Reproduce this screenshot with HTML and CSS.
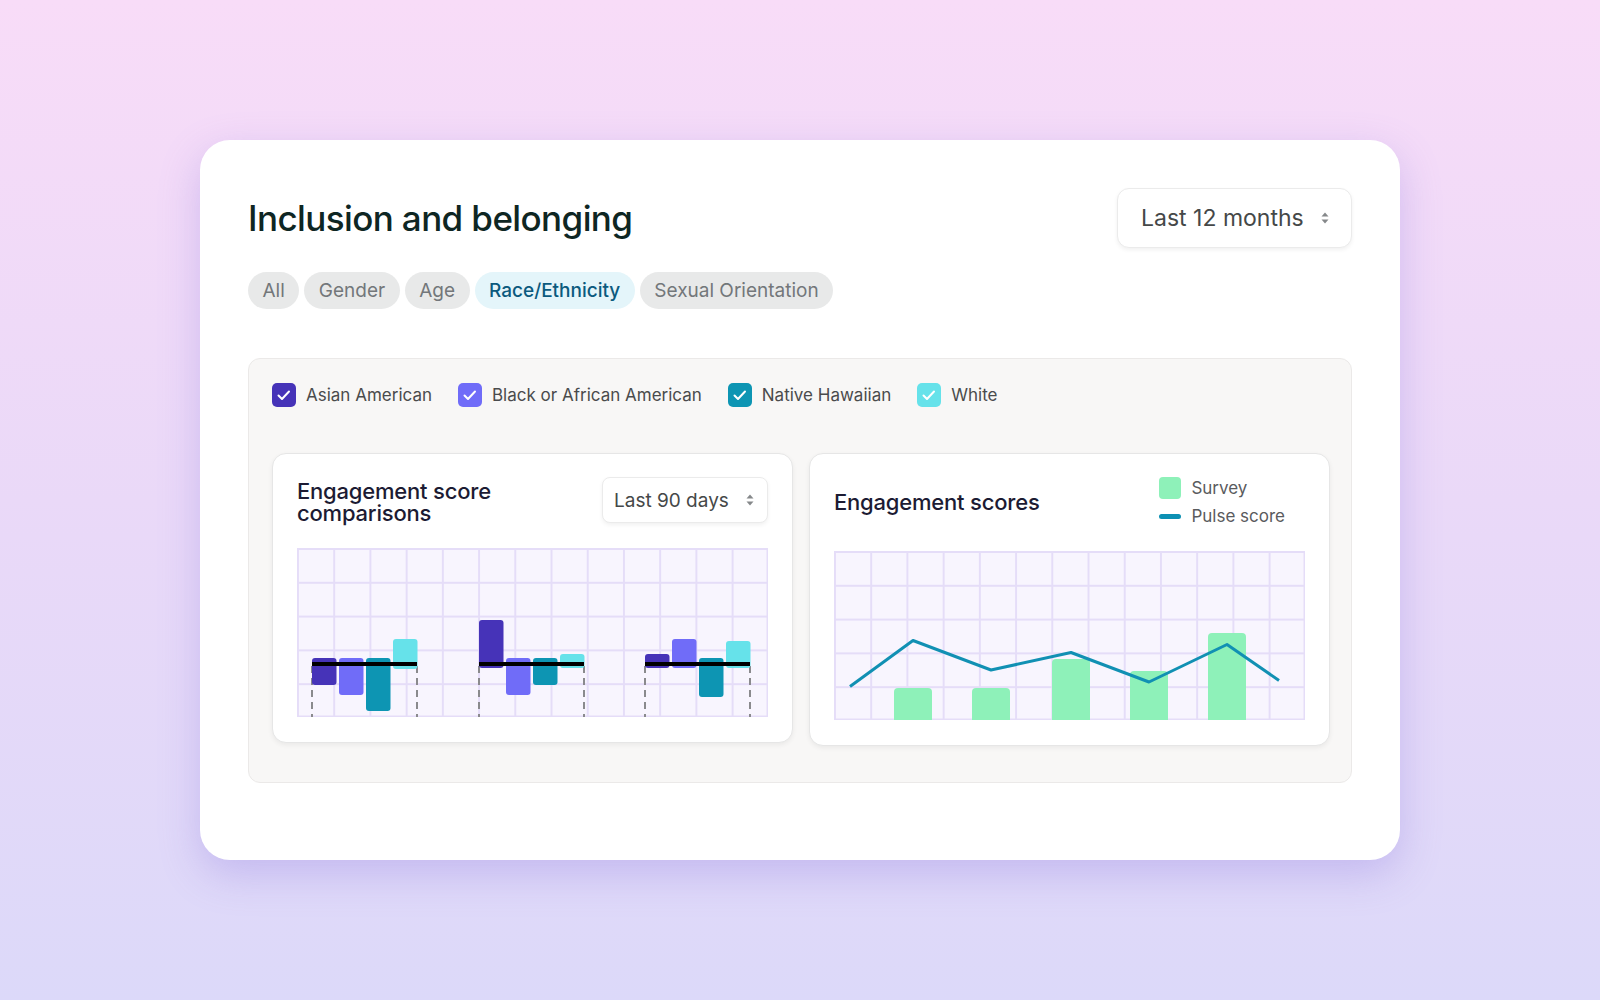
FILE: index.html
```html
<!DOCTYPE html>
<html lang="en">
  <head>
    <meta charset="UTF-8" />
    <meta name="viewport" content="width=device-width, initial-scale=1.0" />
    <title>Inclusion and belonging</title>
    <link rel="stylesheet" href="styles.css">
  </head>
  <body>
    <div class="card">
      <div class="header">
        <h1>Inclusion and belonging</h1>
        <div class="select select-lg">
          <span>Last 12 months</span>
          <svg class="updown" viewBox="0 0 8 12"><path d="M4 0.5L7.5 4.5H0.5Z M4 11.5L7.5 7.5H0.5Z" /></svg>
        </div>
      </div>

      <div class="chips">
        <span class="chip">All</span>
        <span class="chip">Gender</span>
        <span class="chip">Age</span>
        <span class="chip active">Race/Ethnicity</span>
        <span class="chip">Sexual Orientation</span>
      </div>

      <div class="panel">
        <div class="filters">
          <label class="check">
            <span class="box c1"><svg viewBox="0 0 24 24"><path d="M6.5 12.5l3.5 3.5 7-7.5" /></svg></span>
            Asian American
          </label>
          <label class="check">
            <span class="box c2"><svg viewBox="0 0 24 24"><path d="M6.5 12.5l3.5 3.5 7-7.5" /></svg></span>
            Black or African American
          </label>
          <label class="check">
            <span class="box c3"><svg viewBox="0 0 24 24"><path d="M6.5 12.5l3.5 3.5 7-7.5" /></svg></span>
            Native Hawaiian
          </label>
          <label class="check">
            <span class="box c4"><svg viewBox="0 0 24 24"><path d="M6.5 12.5l3.5 3.5 7-7.5" /></svg></span>
            White
          </label>
        </div>

        <div class="charts">
          <div class="chart-card">
            <div class="chart-head">
              <h2 class="narrow">Engagement score comparisons</h2>
              <div class="select select-sm">
                <span>Last 90 days</span>
                <svg class="updown" viewBox="0 0 8 12"><path d="M4 0.5L7.5 4.5H0.5Z M4 11.5L7.5 7.5H0.5Z" /></svg>
              </div>
            </div>
            <svg class="plot" viewBox="0 0 471 169">
              <g class="dash">
                <line x1="15" y1="118" x2="15" y2="169" />
                <line x1="120" y1="118" x2="120" y2="169" />
                <line x1="182" y1="118" x2="182" y2="169" />
                <line x1="287" y1="118" x2="287" y2="169" />
                <line x1="348" y1="118" x2="348" y2="169" />
                <line x1="453" y1="118" x2="453" y2="169" />
              </g>
              <!-- group 1 -->
              <rect class="b1" x="15" y="110" width="24.5" height="27" rx="3" />
              <rect class="b2" x="42" y="110" width="24.5" height="37" rx="3" />
              <rect class="b3" x="69" y="110" width="24.5" height="53" rx="3" />
              <rect class="b4" x="96" y="91" width="24.5" height="30" rx="3" />
              <rect class="base" x="15" y="114" width="105" height="4" />
              <!-- group 2 -->
              <rect class="b1" x="182" y="72" width="24.5" height="48" rx="3" />
              <rect class="b2" x="209" y="110" width="24.5" height="37" rx="3" />
              <rect class="b3" x="236" y="110" width="24.5" height="27" rx="3" />
              <rect class="b4" x="263" y="106" width="24.5" height="14" rx="3" />
              <rect class="base" x="182" y="114" width="105" height="4" />
              <!-- group 3 -->
              <rect class="b1" x="348" y="106" width="24.5" height="14" rx="3" />
              <rect class="b2" x="375" y="91" width="24.5" height="29" rx="3" />
              <rect class="b3" x="402" y="110" width="24.5" height="39" rx="3" />
              <rect class="b4" x="429" y="93" width="24.5" height="27" rx="3" />
              <rect class="base" x="348" y="114" width="105" height="4" />
            </svg>
          </div>

          <div class="chart-card">
            <div class="chart-head center">
              <h2>Engagement scores</h2>
              <div class="legend">
                <div class="legend-item"><span class="swatch"></span>Survey</div>
                <div class="legend-item"><span class="dash-key"></span>Pulse score</div>
              </div>
            </div>
            <svg class="plot" viewBox="0 0 471 169">
              <rect class="survey" x="60" y="137" width="38" height="40" rx="4" />
              <rect class="survey" x="138" y="137" width="38" height="40" rx="4" />
              <rect class="survey" x="218" y="108" width="38" height="70" rx="4" />
              <rect class="survey" x="296" y="120" width="38" height="60" rx="4" />
              <rect class="survey" x="374" y="82" width="38" height="95" rx="4" />
              <polyline class="pulse" points="16,135.5 79,89.5 157,119 237,101.5 315,131 393,93.5 445,129.5" />
            </svg>
          </div>
        </div>
      </div>
    </div>
  </body>
</html>
```

FILE: styles.css
```css
body {
  margin: 0;
  height: 1000px;
  font-family: Inter, "Noto Sans", sans-serif;
  background: linear-gradient(180deg, #f8dcf8 0%, #ead9f8 50%, #dcd9f9 100%);
  display: flex;
  justify-content: center;
  padding-top: 140px;
  box-sizing: border-box;
}
.card {
  width: 1200px;
  height: 720px;
  box-sizing: border-box;
  padding: 48px 48px 0;
  background: white;
  border-radius: 30px;
  box-shadow: 0 14px 40px rgba(130, 110, 220, 0.3);
}
.header {
  display: flex;
  justify-content: space-between;
  align-items: center;
  height: 60px;
}
h1 {
  margin: 0;
  font-size: 35px;
  font-weight: 500;
  letter-spacing: -0.6px;
  color: #0e2623;
}
.select {
  display: flex;
  align-items: center;
  justify-content: space-between;
  box-sizing: border-box;
  background: white;
  border: 1px solid #ebebeb;
  box-shadow: 0 2px 4px rgba(0, 0, 0, 0.06);
  color: #454848;
}
.select-lg {
  width: 235px;
  height: 60px;
  padding: 0 22px 0 23px;
  border-radius: 12px;
  font-size: 23px;
}
.select-sm {
  width: 166px;
  height: 46px;
  padding: 0 13px 0 11px;
  border-radius: 8px;
  font-size: 19px;
}
.updown {
  width: 8px;
  height: 12px;
  fill: #85888a;
}
.chips {
  display: flex;
  gap: 5px;
  margin-top: 24px;
}
.chip {
  height: 37px;
  line-height: 37px;
  padding: 0 14.5px;
  border-radius: 19px;
  background: #e8e9e9;
  color: #73777a;
  font-size: 19px;
}
.chip.active {
  background: #e4f5fa;
  color: #0b5a7e;
  font-weight: 500;
}
.panel {
  margin-top: 49px;
  height: 425px;
  box-sizing: border-box;
  padding: 24px 23px;
  background: #f8f7f6;
  border: 1px solid #ebe9e8;
  border-radius: 12px;
}
.filters {
  display: flex;
  gap: 26px;
  height: 24px;
}
.check {
  display: flex;
  align-items: center;
  gap: 10px;
  font-size: 17px;
  color: #4a4b4c;
}
.box {
  width: 24px;
  height: 24px;
  border-radius: 5px;
}
.box svg {
  display: block;
  width: 24px;
  height: 24px;
  fill: none;
  stroke: white;
  stroke-width: 2;
  stroke-linecap: round;
  stroke-linejoin: round;
}
.c1 { background: #4633b8; }
.c2 { background: #706cf8; }
.c3 { background: #0d95b3; }
.c4 { background: #66e2ea; }
.charts {
  display: grid;
  grid-template-columns: 1fr 1fr;
  gap: 16px;
  align-items: start;
  margin-top: 46px;
}
.chart-card {
  background: white;
  border: 1px solid #e6e6e6;
  border-radius: 14px;
  box-shadow: 0 2px 5px rgba(0, 0, 0, 0.06);
  padding: 23px 24px 25px;
}
.chart-head {
  display: flex;
  justify-content: space-between;
  align-items: flex-start;
  margin-bottom: 24px;
}
.chart-head.center {
  align-items: center;
}
h2 {
  margin: 0;
  font-size: 22px;
  line-height: 22px;
  font-weight: 500;
  color: #1c1b33;
  letter-spacing: -0.2px;
}
h2.narrow {
  max-width: 230px;
  padding-top: 3px;
}
.legend {
  display: flex;
  flex-direction: column;
  gap: 6px;
  margin-right: 20px;
}
.legend-item {
  display: flex;
  align-items: center;
  gap: 10px;
  height: 22px;
  font-size: 17px;
  color: #5a5b5e;
}
.swatch {
  width: 22px;
  height: 22px;
  border-radius: 4px;
  background: #8ef1b9;
}
.dash-key {
  width: 22px;
  height: 5px;
  border-radius: 3px;
  background: #0d90b3;
}
.plot {
  display: block;
  width: 471px;
  height: 169px;
  background-color: #f8f5fe;
  background-image: linear-gradient(90deg, #e5ddf8 1.5px, transparent 1.5px),
    linear-gradient(#e5ddf8 1.5px, transparent 1.5px);
  background-size: calc(100% / 13) calc(100% / 5);
  box-shadow: inset 0 0 0 1.5px #e5ddf8;
}
.dash line {
  stroke: #8a8a8d;
  stroke-width: 2;
  stroke-dasharray: 7 5;
}
.b1 { fill: #4633b8; }
.b2 { fill: #706cf8; }
.b3 { fill: #0d95b3; }
.b4 { fill: #66e2ea; }
.base { fill: #000; }
.survey { fill: #8ef1b9; }
.pulse {
  fill: none;
  stroke: #1190b3;
  stroke-width: 3;
  stroke-linejoin: round;
}
```
